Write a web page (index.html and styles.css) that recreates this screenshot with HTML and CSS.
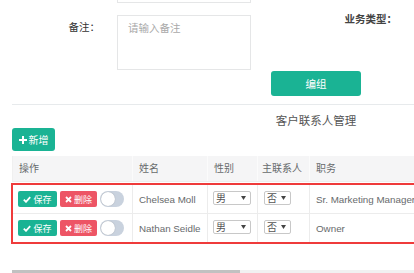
FILE: index.html
```html
<!DOCTYPE html>
<html lang="zh-CN">
<head>
    <meta charset="UTF-8">
    <meta name="viewport" content="width=device-width, initial-scale=1.0">
    <title>客户联系人管理</title>
    <link rel="stylesheet" href="styles.css">
</head>
<body>
    <div class="page">
        <!-- previous field, scrolled off the top -->
        <div class="form-row form-row-cut">
            <span class="form-label"></span>
            <input type="text" class="form-control form-input">
        </div>

        <div class="form-row">
            <label class="form-label" for="remark">备注：</label>
            <textarea id="remark" class="form-control form-textarea" placeholder="请输入备注"></textarea>
            <label class="form-label form-label-right">业务类型：</label>
        </div>

        <div class="form-actions">
            <button type="button" class="btn btn-primary btn-edit">编组</button>
        </div>

        <div class="section">
            <h3 class="section-title">客户联系人管理</h3>
            <button type="button" class="btn btn-primary btn-add">
                <svg class="icon" width="8" height="8" viewBox="0 0 8 8"><path d="M3 0h2v3h3v2H5v3H3V5H0V3h3z" fill="#fff"/></svg>新增
            </button>

            <div class="grid-table">
                <div class="row row-head">
                    <div class="cell">操作</div>
                    <div class="cell">姓名</div>
                    <div class="cell">性别</div>
                    <div class="cell">主联系人</div>
                    <div class="cell">职务</div>
                </div>
                <div class="body">
                    <div class="row">
                        <div class="cell cell-actions">
                            <button type="button" class="btn btn-xs btn-save">
                                <svg class="icon" width="8" height="7" viewBox="0 0 8 7"><path d="M0.8 3.6l2.2 2.2 4.2-4.6" fill="none" stroke="#fff" stroke-width="1.8"/></svg>保存
                            </button>
                            <button type="button" class="btn btn-xs btn-delete">
                                <svg class="icon" width="7" height="7" viewBox="0 0 7 7"><path d="M1 1l5 5M6 1l-5 5" stroke="#fff" stroke-width="1.8"/></svg>删除
                            </button>
                            <span class="switch"><span class="knob"></span></span>
                        </div>
                        <div class="cell">Chelsea Moll</div>
                        <div class="cell">
                            <span class="select select-sex">男<svg class="caret" width="5" height="4" viewBox="0 0 5 4"><path d="M0 0h5L2.5 4z" fill="#444"/></svg></span>
                        </div>
                        <div class="cell">
                            <span class="select select-main">否<svg class="caret" width="5" height="4" viewBox="0 0 5 4"><path d="M0 0h5L2.5 4z" fill="#444"/></svg></span>
                        </div>
                        <div class="cell">Sr. Marketing Manager</div>
                    </div>
                    <div class="row">
                        <div class="cell cell-actions">
                            <button type="button" class="btn btn-xs btn-save">
                                <svg class="icon" width="8" height="7" viewBox="0 0 8 7"><path d="M0.8 3.6l2.2 2.2 4.2-4.6" fill="none" stroke="#fff" stroke-width="1.8"/></svg>保存
                            </button>
                            <button type="button" class="btn btn-xs btn-delete">
                                <svg class="icon" width="7" height="7" viewBox="0 0 7 7"><path d="M1 1l5 5M6 1l-5 5" stroke="#fff" stroke-width="1.8"/></svg>删除
                            </button>
                            <span class="switch"><span class="knob"></span></span>
                        </div>
                        <div class="cell">Nathan Seidle</div>
                        <div class="cell">
                            <span class="select select-sex">男<svg class="caret" width="5" height="4" viewBox="0 0 5 4"><path d="M0 0h5L2.5 4z" fill="#444"/></svg></span>
                        </div>
                        <div class="cell">
                            <span class="select select-main">否<svg class="caret" width="5" height="4" viewBox="0 0 5 4"><path d="M0 0h5L2.5 4z" fill="#444"/></svg></span>
                        </div>
                        <div class="cell">Owner</div>
                    </div>
                </div>
            </div>

            <div class="scrollbar"><div class="scrollbar-thumb"></div></div>
        </div>
    </div>
</body>
</html>
```

FILE: styles.css
```css
* {
    margin: 0;
    padding: 0;
    box-sizing: border-box;
}

body {
    font-family: "Liberation Sans", "Noto Sans CJK SC", sans-serif;
    font-size: 10px;
    color: #676a6c;
    background-color: #fff;
    overflow: hidden;
}

.page {
    width: 632px;
}

/* form */
.form-row {
    display: flex;
    align-items: flex-start;
    margin-top: 12px;
}

.form-row-cut {
    margin-top: -27px;
}

.form-label {
    width: 100px;
    flex: none;
    text-align: right;
    color: #333;
    font-size: 10.5px;
    line-height: 12px;
    padding-top: 6px;
}

.form-label-right {
    width: 146px;
    padding-top: 0;
    margin-top: -2px;
    font-weight: bold;
    color: #444;
}

.form-control {
    flex: none;
    width: 134px;
    margin-left: 17px;
    border: 1px solid #e5e6e7;
    background: #fff;
    font-family: inherit;
    font-size: 10.5px;
    color: #555;
    outline: none;
}

.form-input {
    height: 30px;
}

.form-textarea {
    height: 55px;
    padding: 5px 10px;
    resize: none;
    line-height: 14px;
}

.form-textarea::placeholder {
    color: #a9a9a9;
}

.form-actions {
    padding-left: 271px;
    margin-top: 1px;
}

/* buttons */
.btn {
    display: inline-flex;
    align-items: center;
    justify-content: center;
    border: none;
    color: #fff;
    font-family: inherit;
    cursor: pointer;
    border-radius: 3px;
}

.btn-primary {
    background-color: #1ab394;
}

.btn-edit {
    width: 90px;
    height: 25px;
    font-size: 10.5px;
}

.btn-add {
    width: 43px;
    height: 23px;
    font-size: 10px;
    gap: 2px;
}

.btn-xs {
    height: 16px;
    font-size: 9px;
    border-radius: 2px;
    gap: 2px;
    vertical-align: middle;
}

.btn-save {
    width: 39px;
    background-color: #1ab394;
}

.btn-delete {
    width: 37px;
    margin-left: 3px;
    background-color: #ed5565;
}

.icon {
    flex: none;
}

/* section */
.section {
    margin: 8px 12px 0;
    border-top: 1px solid #e7eaec;
    padding-top: 9px;
}

.section-title {
    text-align: center;
    font-size: 11.5px;
    font-weight: normal;
    line-height: 14px;
    color: #555;
}

/* table */
.grid-table {
    margin-top: 5px;
}

.row {
    display: grid;
    grid-template-columns: 120px 75px 50px 52px 300px;
}

.cell {
    white-space: nowrap;
    overflow: hidden;
}

.row-head {
    height: 26px;
    background-color: #f5f5f6;
    border-bottom: 1px solid #eee;
    line-height: 26px;
}

.row-head .cell {
    padding: 0 6px;
    border-left: 1px solid #fbfbfb;
}

.row-head .cell:first-child {
    border-left: 1px solid #f0f0f0;
}

.row-head .cell:nth-child(4) {
    padding: 0 4px;
}

.body {
    margin: 1px 0 0 -1px;
    border: 2px solid #ef3b3b;
}

.body .row {
    grid-template-columns: 119px 75px 50px 52px 300px;
    height: 28px;
    font-size: 9.8px;
}

.body .row + .row {
    height: 29px;
    border-top: 1px solid #ececec;
}

.body .cell {
    display: flex;
    align-items: center;
    padding: 0 5px;
    border-left: 1px solid #ececec;
}

.body .cell:first-child {
    border-left: none;
}

.body .cell:nth-child(2),
.body .cell:nth-child(4),
.body .cell:nth-child(5) {
    padding-left: 6px;
}

.switch {
    display: inline-block;
    flex: none;
    width: 24px;
    height: 16px;
    margin-left: 3px;
    border-radius: 8px;
    background-color: #c9d2de;
    padding: 1px;
}

.knob {
    display: block;
    width: 14px;
    height: 14px;
    border-radius: 50%;
    background-color: #fff;
    box-shadow: 0 0 1px rgba(0, 0, 0, 0.3);
}

.select {
    display: inline-flex;
    align-items: center;
    justify-content: space-between;
    flex: none;
    height: 14px;
    border: 1px solid #c8c8c8;
    border-radius: 2px;
    background: #fff;
    color: #555;
    font-size: 10px;
    padding: 0 4px 0 2px;
    margin-top: -3px;
}

.select-sex {
    width: 38px;
}

.select-main {
    width: 27px;
}

.caret {
    flex: none;
}

/* horizontal scrollbar of the table */
.scrollbar {
    margin-top: 26px;
    height: 8px;
    background-color: #f1f1f1;
}

.scrollbar-thumb {
    width: 228px;
    height: 100%;
    background-color: #c1c1c1;
}
```
